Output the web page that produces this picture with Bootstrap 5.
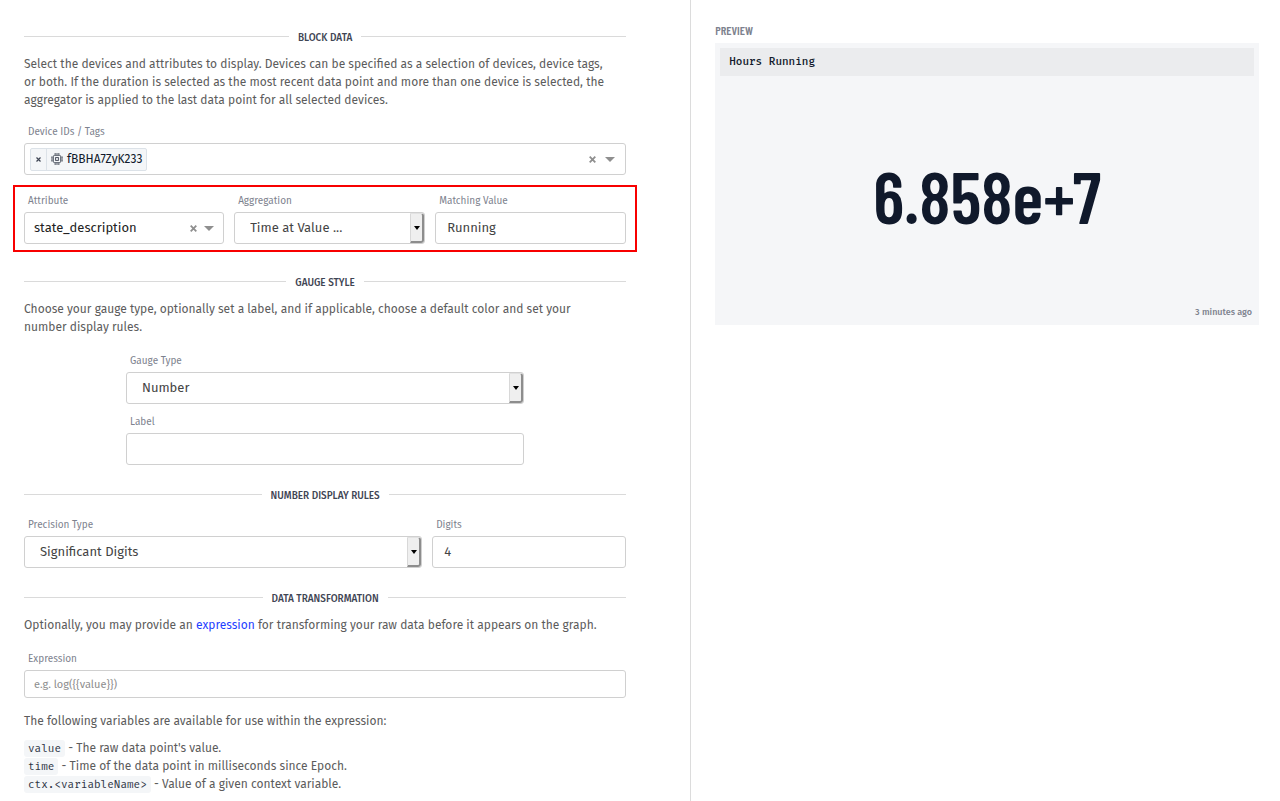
<!DOCTYPE html>
<html lang="en">
<head>
<meta charset="utf-8">
<meta name="viewport" content="width=device-width, initial-scale=1">
<title>Gauge block settings</title>
<link rel="stylesheet" href="https://cdn.jsdelivr.net/npm/bootstrap@5.3.0/dist/css/bootstrap.min.css">
<style>
  :root { --line: #d0d0d0; --ink: #10192b; --soft: #7d828e; --mono: "Fira Mono", "Fira Code", "DejaVu Sans Mono", monospace; --narrow: "Barlow Condensed", "Liberation Sans Narrow", "Roboto Condensed", sans-serif; }
  body { font-family: "Fira Sans", "Noto Sans", sans-serif; font-size: 12px; line-height: 18px; color: #5c5c5c; background: #fff; }
  .editor { width: 54%; padding: 26px 64px 8px 24px; border-right: 1px solid #dcdcdc; }
  .preview { padding: 21px 21px 24px 24px; min-width: 0; }
  .rule { font-size: 10px; line-height: 16px; font-weight: 500; color: #3f4554; margin: 19px 0 9px; gap: 9px; }
  .rule:first-child { margin-top: 0; }
  .rule span { padding-top: 4px; }
  .rule::before, .rule::after { content: ""; flex: 1; height: 1px; background: #dadada; }
  .rule.roomy { margin-bottom: 12px; }
  .field-label { display: block; font-size: 10px; line-height: 18px; color: var(--soft); margin: 0 0 2px 4px; }
  .form-control, .form-select, .combo { height: 32px; border: 1px solid var(--line); border-radius: 3px; font-size: 13px; line-height: 20px; color: #444; background: #fff; }
  .form-control { padding: 0 11px 1px; }
  .form-select { padding: 0 24px 0 15px; }
  .form-control.slim { height: 28px; font-size: 11px; padding: 0 9px; }
  .form-control::placeholder { color: #8e8e8e; }
  .combo { padding: 0 6px 0 5px; }
  .combo input { border: 0; outline: 0; padding: 0 4px; min-width: 0; color: #222; background: transparent; }
  .combo button, .chip button { border: 0; background: transparent; padding: 0; line-height: 1; display: flex; align-items: center; justify-content: center; }
  .combo .tool { width: 18px; height: 20px; color: #8f8f8f; }
  .chip { height: 23px; border: 1px solid #dce2e8; border-radius: 2px; background: #f4f6f8; color: var(--ink); font-size: 12px; }
  .chip button { width: 16px; height: 21px; border-right: 1px solid #dce2e8; color: #3f4554; }
  .pick::after { content: ""; position: absolute; top: 1px; right: 1px; bottom: 1px; width: 14px; pointer-events: none;
    border: solid; border-width: 1px 2px 2px 1px; border-color: #e2e2e2 #8d8d8d #8d8d8d #d8d8d8; border-radius: 0 3px 3px 0;
    background: #efefef url("data:image/svg+xml,%3Csvg xmlns='http://www.w3.org/2000/svg' viewBox='0 0 6 4'%3E%3Cpath d='M0 0h6L3 4z'/%3E%3C/svg%3E") center / 6px 4px no-repeat; }
  .callout-box { margin: 10px -11px 0; padding: 5px 9px 6px; border: 2px solid #f80000; }
  .trio { display: grid; grid-template-columns: minmax(0, 22fr) minmax(0, 21fr) minmax(0, 21fr); gap: 10px; }
  .row.tight { --bs-gutter-x: 10px; }
  .blurb { margin: 0 0 14px; }
  .blurb.roomy { margin-bottom: 16px; }
  .stacked { margin-bottom: 9px; }
  .blurb a { color: #1f3fff; }
  .hint { margin: 14px 0 9px; }
  code { font-family: var(--mono); font-size: 11px; line-height: 1; color: #2d3444; background: #f4f6f8; border-radius: 3px; padding: 2px 4px; }
  .preview h2 { font-family: var(--narrow); font-size: 12px; line-height: 18px; font-weight: 600; color: var(--soft); margin: 0 0 4px; }
  .tile { background: #f5f6f8; padding: 5px; min-height: 282px; color: var(--ink); }
  .tile h3 { font-family: var(--mono); font-size: 11px; line-height: 18px; font-weight: 500; background: #ebecee; margin: 0; padding: 5px 9px; }
  .figure-value { font-family: var(--narrow); font-size: 72px; line-height: 80px; font-weight: 600; padding-top: 9px; }
  .ago { font-size: 9px; line-height: 16px; font-weight: 500; color: var(--soft); padding-right: 2px; }
</style>
</head>
<body>
<div class="d-flex min-vh-100">
  <main class="editor flex-shrink-0">
    <form>
      <h2 class="rule d-flex align-items-center"><span>BLOCK DATA</span></h2>
      <p class="blurb">Select the devices and attributes to display. Devices can be specified as a selection of devices, device tags,<br>or both. If the duration is selected as the most recent data point and more than one device is selected, the<br>aggregator is applied to the last data point for all selected devices.</p>
      <label class="field-label" for="devices">Device IDs / Tags</label>
      <div class="combo d-flex align-items-center">
        <span class="chip d-flex align-items-center flex-shrink-0 pe-1">
          <button type="button" aria-label="Remove device"><svg width="5" height="5" viewBox="0 0 5 5" stroke="currentColor" stroke-width="1.2"><path d="M.5.5l4 4M4.5.5l-4 4"/></svg></button>
          <svg class="ms-1 me-1" width="12" height="12" viewBox="0 0 13 13" fill="none" stroke="#3f4554"><rect x="2.5" y="2.5" width="8" height="8" rx="1.5"/><rect x="5" y="5" width="3" height="3"/><path d="M4.5 0v2M6.5 0v2M8.5 0v2M4.5 11v2M6.5 11v2M8.5 11v2M0 4.5h2M0 6.5h2M0 8.5h2M11 4.5h2M11 6.5h2M11 8.5h2"/></svg>
          <span>fBBHA7ZyK233</span>
        </span>
        <input id="devices" class="flex-grow-1" type="text">
        <button class="tool" type="button" aria-label="Clear devices"><svg width="7" height="7" viewBox="0 0 7 7" stroke="currentColor" stroke-width="1.8"><path d="M.7.7l5.6 5.6M6.3.7L.7 6.3"/></svg></button>
        <button class="tool" type="button" aria-label="Open devices"><svg width="10" height="5" viewBox="0 0 10 5" fill="currentColor"><path d="M0 0h10L5 5z"/></svg></button>
      </div>

      <div class="callout-box">
        <div class="trio">
          <div>
            <label class="field-label" for="attribute">Attribute</label>
            <div class="combo d-flex align-items-center">
              <input id="attribute" class="flex-grow-1" type="text" value="state_description">
              <button class="tool" type="button" aria-label="Clear attribute"><svg width="7" height="7" viewBox="0 0 7 7" stroke="currentColor" stroke-width="1.8"><path d="M.7.7l5.6 5.6M6.3.7L.7 6.3"/></svg></button>
              <button class="tool" type="button" aria-label="Open attributes"><svg width="10" height="5" viewBox="0 0 10 5" fill="currentColor"><path d="M0 0h10L5 5z"/></svg></button>
            </div>
          </div>
          <div>
            <label class="field-label" for="aggregation">Aggregation</label>
            <div class="pick position-relative"><select id="aggregation" class="form-select"><option>Time at Value ...</option></select></div>
          </div>
          <div>
            <label class="field-label" for="matching">Matching Value</label>
            <input id="matching" class="form-control" type="text" value="Running">
          </div>
        </div>
      </div>

      <h2 class="rule d-flex align-items-center"><span>GAUGE STYLE</span></h2>
      <p class="blurb roomy">Choose your gauge type, optionally set a label, and if applicable, choose a default color and set your<br>number display rules.</p>
      <div class="row tight">
        <div class="col-8 offset-2">
          <label class="field-label" for="gauge">Gauge Type</label>
          <div class="pick position-relative stacked"><select id="gauge" class="form-select"><option>Number</option></select></div>
          <label class="field-label" for="label">Label</label>
          <input id="label" class="form-control" type="text">
        </div>
      </div>

      <h2 class="rule roomy d-flex align-items-center"><span>NUMBER DISPLAY RULES</span></h2>
      <div class="row tight">
        <div class="col-8">
          <label class="field-label" for="precision">Precision Type</label>
          <div class="pick position-relative"><select id="precision" class="form-select"><option>Significant Digits</option></select></div>
        </div>
        <div class="col-4">
          <label class="field-label" for="digits">Digits</label>
          <input id="digits" class="form-control" type="text" value="4">
        </div>
      </div>

      <h2 class="rule d-flex align-items-center"><span>DATA TRANSFORMATION</span></h2>
      <p class="blurb roomy">Optionally, you may provide an <a class="text-decoration-none" href="#expression">expression</a> for transforming your raw data before it appears on the graph.</p>
      <label class="field-label" for="expression">Expression</label>
      <input id="expression" class="form-control slim" type="text" placeholder="e.g. log({{value}})">
      <p class="hint">The following variables are available for use within the expression:</p>
      <ul class="list-unstyled mb-0">
        <li><code>value</code> - The raw data point's value.</li>
        <li><code>time</code> - Time of the data point in milliseconds since Epoch.</li>
        <li><code>ctx.&lt;variableName&gt;</code> - Value of a given context variable.</li>
      </ul>
    </form>
  </main>
  <aside class="preview flex-grow-1">
    <h2>PREVIEW</h2>
    <section class="tile d-flex flex-column">
      <h3>Hours Running</h3>
      <div class="figure-value flex-grow-1 d-flex align-items-center justify-content-center">6.858e+7</div>
      <div class="ago text-end">3 minutes ago</div>
    </section>
  </aside>
</div>
<script src="https://cdn.jsdelivr.net/npm/bootstrap@5.3.0/dist/js/bootstrap.bundle.min.js"></script>
</body>
</html>
